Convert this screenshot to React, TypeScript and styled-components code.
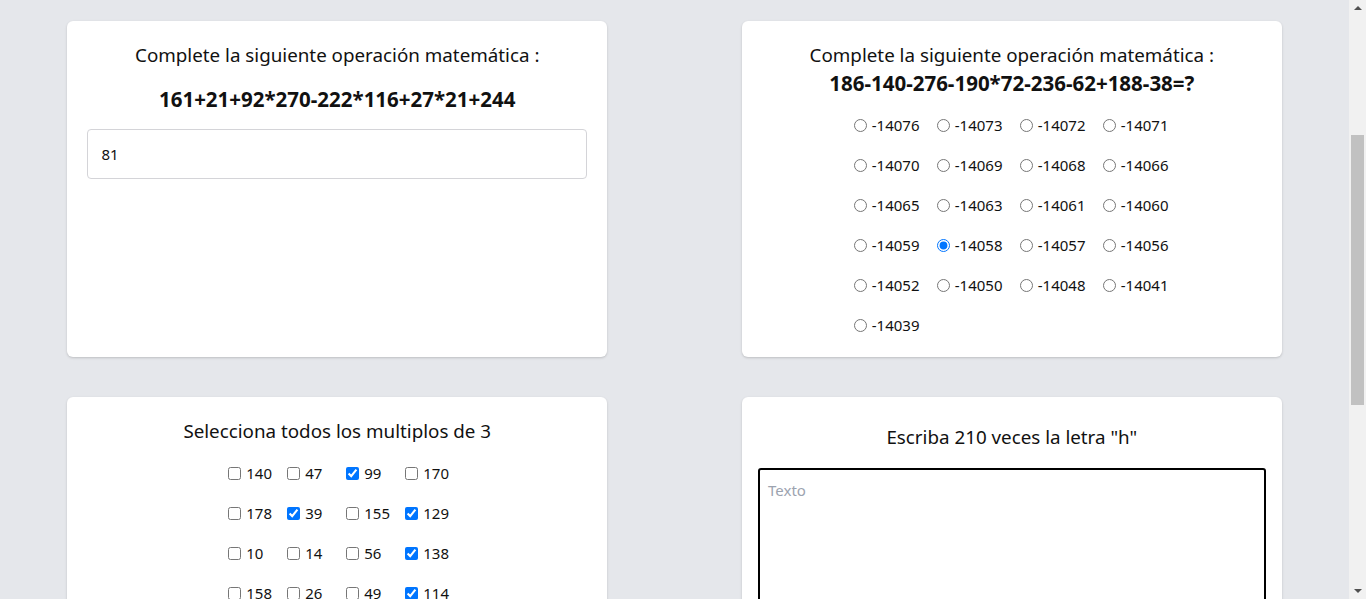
import React, { useLayoutEffect } from "react";
import styled, { createGlobalStyle } from "styled-components";

const GlobalStyle = createGlobalStyle`
  html, body { margin: 0; padding: 0; }
  html { scrollbar-width: none; }
  html::-webkit-scrollbar { display: none; }
  body {
    margin-right: 17px;
    background: #e5e7eb;
    font-family: "Noto Sans", "Open Sans", sans-serif;
    color: #111;
  }
  * { box-sizing: border-box; }
`;

/* Visual stand-in for the browser's classic scrollbar, fixed over the right edge */
const ScrollRail = styled.div`
  position: fixed;
  top: 0;
  right: 0;
  width: 17px;
  height: 100vh;
  background: #f1f1f1;
  display: flex;
  flex-direction: column;
  align-items: center;
  justify-content: space-between;
`;

const Arrow = styled.span<{ $down?: boolean }>`
  width: 0;
  height: 0;
  margin: 6px 0;
  border-left: 4px solid transparent;
  border-right: 4px solid transparent;
  ${(p) =>
    p.$down ? "border-top: 4px solid #505050;" : "border-bottom: 4px solid #505050;"}
`;

const Thumb = styled.span`
  position: absolute;
  left: 2px;
  right: 2px;
  top: 135px;
  height: 270px;
  background: #c1c1c1;
`;

const Page = styled.main`
  display: grid;
  grid-template-columns: 1fr 1fr;
  column-gap: 135px;
  row-gap: 40px;
  padding: 283px 5% 287px;
  align-items: stretch;
`;

const Card = styled.section<{ $pad?: string }>`
  background: #fff;
  border-radius: 6px;
  box-shadow: 0 1px 3px rgba(0, 0, 0, 0.12), 0 1px 2px rgba(0, 0, 0, 0.06);
  padding: ${(p) => p.$pad || "20px"};
  display: flex;
  flex-direction: column;
  align-items: stretch;
  text-align: center;
`;

const Title = styled.h3<{ $mt?: number }>`
  margin: ${(p) => p.$mt || 0}px 0 0;
  font-size: 18.8px;
  line-height: 28px;
  font-weight: 400;
`;

const Expr = styled.p<{ $spaced?: boolean }>`
  margin: ${(p) => (p.$spaced ? "16px 0" : "0")};
  font-size: 20.5px;
  line-height: 28px;
  font-weight: 700;
`;

const AnswerInput = styled.input`
  width: 100%;
  height: 50px;
  border: 1px solid #d4d4d8;
  border-radius: 4px;
  padding: 0 13px;
  font-family: inherit;
  font-size: 15px;
  color: #111;
  outline: none;
`;

const OptionGrid = styled.div<{ $col: number; $gap: number }>`
  display: grid;
  grid-template-columns: repeat(4, ${(p) => p.$col}px);
  column-gap: ${(p) => p.$gap}px;
  row-gap: 16px;
  justify-content: center;
  margin-top: 16px;
`;

const Option = styled.label`
  display: flex;
  align-items: center;
  height: 24px;
  font-size: 15px;
  white-space: nowrap;
  text-align: left;

  input {
    margin: 0 5px 0 5px;
    width: 13px;
    height: 13px;
  }
`;

const TextBox = styled.textarea`
  margin-top: 17px;
  width: 100%;
  height: 220px;
  border: 2px solid #000;
  border-radius: 3px;
  padding: 10px 8px;
  font-family: inherit;
  font-size: 15px;
  resize: none;
  outline: none;
  &::placeholder { color: #9ca3af; }
`;

const radios = [
  "-14076", "-14073", "-14072", "-14071",
  "-14070", "-14069", "-14068", "-14066",
  "-14065", "-14063", "-14061", "-14060",
  "-14059", "-14058", "-14057", "-14056",
  "-14052", "-14050", "-14048", "-14041",
  "-14039",
];

const checks: [string, boolean][] = [
  ["140", false], ["47", false], ["99", true], ["170", false],
  ["178", false], ["39", true], ["155", false], ["129", true],
  ["10", false], ["14", false], ["56", false], ["138", true],
  ["158", false], ["26", false], ["49", false], ["114", true],
];

export default function App() {
  useLayoutEffect(() => {
    window.scrollTo(0, 262);
  }, []);

  return (
    <>
      <GlobalStyle />
      <Page>
        <Card>
          <Title>Complete la siguiente operación matemática :</Title>
          <Expr $spaced>161+21+92*270-222*116+27*21+244</Expr>
          <AnswerInput defaultValue="81" />
        </Card>

        <Card>
          <Title>Complete la siguiente operación matemática :</Title>
          <Expr>186-140-276-190*72-236-62+188-38=?</Expr>
          <OptionGrid $col={77} $gap={6}>
            {radios.map((r) => (
              <Option key={r}>
                <input type="radio" name="op" defaultChecked={r === "-14058"} />
                {r}
              </Option>
            ))}
          </OptionGrid>
        </Card>

        <Card>
          <Title>Selecciona todos los multiplos de 3</Title>
          <OptionGrid $col={51} $gap={8}>
            {checks.map(([n, c]) => (
              <Option key={n}>
                <input type="checkbox" defaultChecked={c} />
                {n}
              </Option>
            ))}
          </OptionGrid>
        </Card>

        <Card $pad="16px">
          <Title $mt={10}>Escriba 210 veces la letra "h"</Title>
          <TextBox placeholder="Texto" />
        </Card>
      </Page>
      <ScrollRail aria-hidden>
        <Arrow />
        <Thumb />
        <Arrow $down />
      </ScrollRail>
    </>
  );
}
